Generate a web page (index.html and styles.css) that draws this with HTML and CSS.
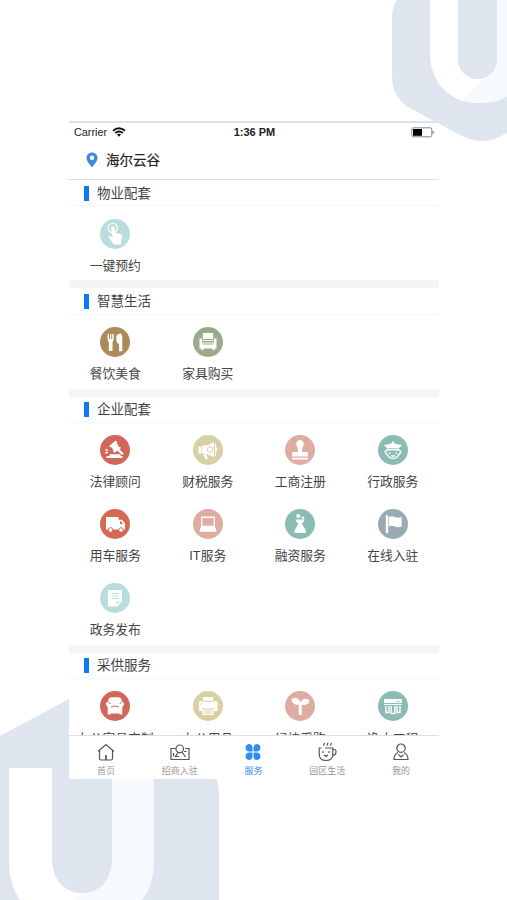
FILE: index.html
```
<!DOCTYPE html>
<html lang="zh-CN">
<head>
  <meta charset="UTF-8" />
  <meta name="viewport" content="width=device-width, initial-scale=1.0"/>
  <title>服务</title>
  <link rel="stylesheet" href="styles.css">
</head>
<body>
  <svg class="bg" viewBox="0 0 507 900">
    <path fill="#dee5ef" d="M397 0Q392 8 392 18V77C392 90 398 101 410 108L460 135C473 142 487 143 499 137L507 133V0Z"/>
    <path fill="#fff" d="M430 0V53C430 83 450 103 478 103C490 103 499 101 507 96V0H497V59C497 71 489 79 478 79S458 71 458 59V0Z"/>
    <path fill="#f6f9fd" d="M497 0H507V96C499 101 490 103 478 103C472 103 467 102 462 100L485 78C492 75 497 69 497 59Z"/>
    <path fill="#dee5ef" d="M0 736L69 699L205 765Q219 775 219 794V900H0Z"/>
    <path fill="#fff" d="M9 768H52V857C52 880 64 893 82 893V900H20C12 888 9 876 9 860Z"/>
    <path fill="#f6f9fd" d="M112 768H154V860C154 877 150 890 142 900H72L82 893C100 893 112 880 112 857Z"/>
  </svg>

  <div class="phone">
    <div class="status">
      <span class="carrier">Carrier
        <svg width="14" height="10" viewBox="0 0 14 10"><g fill="none" stroke="#111" stroke-width="1.9"><path d="M1 3.7Q7-1.2 13 3.7"/><path d="M3.2 6.1Q7 2.9 10.8 6.1"/></g><path d="M4.9 7.6Q7 6 9.1 7.6L7 9.8Z" fill="#111"/></svg>
      </span>
      <b>1:36 PM</b>
      <span class="power">
        <svg width="24" height="11" viewBox="0 0 24 11"><rect x=".8" y=".8" width="20" height="9" rx="1.5" fill="#fff" stroke="#888"/><path d="M2 2H11V8.8H2Z" fill="#000"/><path d="M21.5 3.5L23.5 5.3L21.5 7.2Z" fill="#888"/></svg>
      </span>
    </div>
    <div class="place">
      <svg width="12" height="16" viewBox="0 0 12 16"><path fill="#428bdb" fill-rule="evenodd" d="M6 .5C2.8.5.5 2.8.5 6C.5 9.5 4 12.5 6 15.5C8 12.5 11.5 9.5 11.5 6C11.5 2.8 9.2.5 6 .5ZM6 3.6A2.2 2.2 0 1 1 6 8A2.2 2.2 0 1 1 6 3.6Z"/></svg>
      <span>海尔云谷</span>
    </div>

    <main>
      <section>
        <h3>物业配套</h3>
        <div class="list">
          <div class="item">
            <svg class="icon aqua" viewBox="0 0 30 30"><circle class="line" cx="12.8" cy="9" r="4.6"/><path d="M11 9A1.8 1.8 0 0 1 14.6 9L15.5 14L20.5 15Q22.2 15.5 22 17.5L21.3 22L20.8 25.5H14L9 19Q8 17 9.5 16.8L12.5 18.5Z"/></svg>
            <p>一键预约</p>
          </div>
        </div>
      </section>

      <section>
        <h3>智慧生活</h3>
        <div class="list">
          <div class="item">
            <svg class="icon brown" viewBox="0 0 30 30"><path d="M7.5 7H9V12H10V7H11.2V12H12.2V7H13.7V12Q13.5 14.5 12.5 15V24H8.8V15Q7.8 14.5 7.5 12ZM16.3 9Q18 6 21 6.5Q22.7 9 22.3 15V24.3H19V17Q15.7 16 16.3 9Z"/></svg>
            <p>餐饮美食</p>
          </div>
          <div class="item">
            <svg class="icon green" viewBox="0 0 30 30"><path d="M9.8 6H20.2V14H9.8ZM6.5 11.5H9V15.5H21V11.5H23.5V21.5H21.5V23.3H19.5V21.5H10.5V23.3H8.5V21.5H6.5Z"/><path class="cut" d="M10 12.5H20M9.5 17H20.5"/></svg>
            <p>家具购买</p>
          </div>
        </div>
      </section>

      <section>
        <h3>企业配套</h3>
        <div class="list">
          <div class="item">
            <svg class="icon red" viewBox="0 0 30 30"><path d="M9.3 11L15.7 5.5L17.3 7.3L16.8 8.3L19.2 12L20.3 12L21 13.2L14.2 17.7L13 16.3L13.4 15L11 11.7L10 12.3ZM17.5 12.7L23.7 18.3L22.2 20L16 14.5ZM9.5 19.3H20.5V21H22.5V23H6.5V21H9.5Z"/><path class="line" d="M5.5 14.5L8 15.5M5.2 18L8 17.3"/></svg>
            <p>法律顾问</p>
          </div>
          <div class="item">
            <svg class="icon sand" viewBox="0 0 30 30"><path d="M5.5 11.5H8.5V18.5H5.5ZM9.3 10.8L15 10L21 7V22L15 19.5L9.3 18.7ZM10 19.5H13L15 23.5L12.5 24.5ZM22 8.5H23V21H22Z"/><circle class="cut" cx="17" cy="14.5" r="2.8"/><path d="M23 12Q26 14.5 23 17"/></svg>
            <p>财税服务</p>
          </div>
          <div class="item">
            <svg class="icon pink" viewBox="0 0 30 30"><path d="M15 5A4 4 0 0 1 17.5 12L17 17H21.5Q23 17 23 19V21.5H7V19Q7 17 8.5 17H13L12.5 12A4 4 0 0 1 15 5ZM7 22.8H23V24.5H7Z"/></svg>
            <p>工商注册</p>
          </div>
          <div class="item">
            <svg class="icon teal" viewBox="0 0 30 30"><path d="M6 10L13 8.7L15 6L17 8.7L24 10L20.5 13.8Q15 12.2 9.5 13.8Z"/><g class="line"><path d="M8.5 15.3Q6 16 8 18.3L11.5 22.5Q15 24.5 18.5 22.5L22 18.3Q24 16 21.5 15.3Q15 13.7 8.5 15.3Z"/><path d="M11 17.8L12.5 18.5M19 17.8L17.5 18.5M13 21H17"/></g></svg>
            <p>行政服务</p>
          </div>
          <div class="item">
            <svg class="icon orange" viewBox="0 0 30 30"><path fill-rule="evenodd" d="M6 8H18.5V10.8H22L25 14.5V20.5H6ZM20 12.2V15H23L21 12.2Z"/><g stroke="#d36b54"><circle cx="10.5" cy="21" r="2.3"/><circle cx="21" cy="21" r="2.3"/></g></svg>
            <p>用车服务</p>
          </div>
          <div class="item">
            <svg class="icon pink" viewBox="0 0 30 30"><path fill-rule="evenodd" d="M8 8Q8 7.5 8.5 7.5H21.5Q22 7.5 22 8V18H8ZM9.4 9V16.8H20.6V9ZM7.7 18H22.3L23.5 22.8H6.5Z"/></svg>
            <p>IT服务</p>
          </div>
          <div class="item">
            <svg class="icon teal" viewBox="0 0 30 30"><circle cx="13.3" cy="7" r="2"/><circle cx="18" cy="8.7" r="1.3"/><path d="M10.5 10.5H19.5Q19 13.5 16.8 14.5Q18 17 20.5 20.5L21 24H9.3L10 20.5Q12.5 17 13.3 14.5Q11 13.5 10.5 10.5Z"/></svg>
            <p>融资服务</p>
          </div>
          <div class="item">
            <svg class="icon slate" viewBox="0 0 30 30"><path d="M7.8 6.5Q9 5.5 10.2 6.5V24H7.8ZM10.8 8Q14 6.7 17 8T23.7 8V17.5Q20.5 19 17 17.5T10.8 17.5Z"/></svg>
            <p>在线入驻</p>
          </div>
          <div class="item">
            <svg class="icon aqua" viewBox="0 0 30 30"><path d="M8 7H22V18L17.5 23.5H8Z"/><path class="cut" d="M11.5 10.5H18.5M11.5 13H18.5M11.5 15.5H18.5M17.5 21.5V19H19.5"/></svg>
            <p>政务发布</p>
          </div>
        </div>
      </section>

      <section>
        <h3>采供服务</h3>
        <div class="list">
          <div class="item">
            <svg class="icon red" viewBox="0 0 30 30"><path d="M8.3 10.5Q8 6.3 12 6.3H18Q22 6.3 21.7 10.5Q24.7 11 24 14L22.3 16V23.5H19.5V22.5H10.5V23.5H7.7V16L6 14Q5.3 11 8.3 10.5Z"/><path class="cut" d="M8.5 11L10.5 13M21.5 11L19.5 13M11 16Q15 14 19 16"/></svg>
            <p>办公家具定制</p>
          </div>
          <div class="item">
            <svg class="icon sand" viewBox="0 0 30 30"><path d="M10 6H20V10H23Q24.5 10 24.5 11.5V20H20.5V24H9.5V20H6V11.5Q6 10 7.5 10H10Z"/><path class="cut" d="M9.5 10.3H20.5M9 18H21M11 20H19M11 22H19M7.5 13H9"/></svg>
            <p>办公用品</p>
          </div>
          <div class="item">
            <svg class="icon pink" viewBox="0 0 30 30"><path d="M6.5 8.5Q9 5.8 12.5 7.5Q14.5 8.7 15.2 11.3Q17.5 7.5 21 7.8Q23.5 8 24.5 9.5Q24 13 20 14Q18 14.3 16.7 13.7V24H13.7V13.8Q7.5 14.5 6.5 8.5Z"/></svg>
            <p>绿植采购</p>
          </div>
          <div class="item">
            <svg class="icon teal" viewBox="0 0 30 30"><path d="M6 8H24V14H6Z"/><path class="cut" d="M6 12.5H24M19 10.3H21.5"/><g class="line"><path d="M8 15V21.5H11V15M13.2 15V22.5H16.8V15M19 15V21.5H22V15"/></g></svg>
            <p>净水工程</p>
          </div>
        </div>
      </section>
    </main>

    <nav>
      <a>
        <svg viewBox="0 0 20 20"><path d="M3.5 8.5V16.5Q3.5 18 5 18H15Q16.5 18 16.5 16.5V8.5M2 9.5L10 2.5L18 9.5"/><path d="M10 13V18" stroke-width="1.7"/></svg>
        首页
      </a>
      <a>
        <svg viewBox="0 0 20 20"><path d="M5.5 6.5H1V17.5H19V6.5H15"/><circle cx="9.7" cy="6.8" r="3.8"/><path d="M12 10L15.5 15M8 10.5L5.5 14.5H9M3.5 11V14.5M14 9.5H16.5"/></svg>
        招商入驻
      </a>
      <a class="active">
        <svg viewBox="0 0 20 20"><path d="M5.8 2A3.8 3.8 0 0 1 9.5 5.8V9.5H5.8A3.8 3.8 0 0 1 5.8 2ZM14.2 2A3.8 3.8 0 0 0 10.5 5.8V9.5H14.2A3.8 3.8 0 0 0 14.2 2ZM5.8 18A3.8 3.8 0 0 0 9.5 14.2V10.5H5.8A3.8 3.8 0 0 0 5.8 18ZM14.2 18A3.8 3.8 0 0 1 10.5 14.2V10.5H14.2A3.8 3.8 0 0 1 14.2 18Z"/></svg>
        服务
      </a>
      <a>
        <svg viewBox="0 0 20 20"><path d="M4.5 6H2.2V12Q2.2 18.5 9 18.5T15.8 12V6H8M16 7.5H17Q19 7.5 19 9.5Q19 13.5 15.5 13.5M6.5 3.5L7.5 1M10 3.5L11 1M13.5 3.5L14.5 1M6 9V11M12 9V11M7 13Q9 15 11 13"/></svg>
        园区生活
      </a>
      <a>
        <svg viewBox="0 0 20 20"><circle cx="10" cy="6.2" r="4.2"/><path d="M7 10.5Q3 12.5 3 17.5H17Q17 12.5 13 10.5M7.5 12.5L10 15L12.5 12.5"/></svg>
        我的
      </a>
    </nav>
  </div>
</body>
</html>
```

FILE: styles.css
```
* {
  box-sizing: border-box;
}
body {
  margin: 0;
  height: 900px;
  overflow: hidden;
  background: #fff;
  color: #444;
  font-family: "Liberation Sans", "Noto Sans CJK SC", sans-serif;
}
.bg {
  position: absolute;
  top: 0;
  left: 0;
  width: 507px;
  height: 900px;
  z-index: -1;
}
.phone {
  display: flex;
  flex-direction: column;
  width: 370px;
  height: 658px;
  margin: 121px 0 0 69px;
  background: #fff;
  border-top: 2px solid #d5e3f1;
}
.status {
  display: grid;
  grid-template-columns: 1fr auto 1fr;
  align-items: center;
  height: 18px;
  padding: 0 4px 0 5px;
  font-size: 10.8px;
  color: #222;
}
.carrier {
  display: flex;
  align-items: center;
  gap: 5px;
}
.status b {
  font-size: 11px;
}
.power {
  display: flex;
  justify-content: flex-end;
}
.place {
  display: flex;
  align-items: center;
  gap: 8px;
  height: 39px;
  padding-left: 17px;
  border-bottom: 1px solid #ddd;
  font-size: 13.5px;
  color: #222;
  -webkit-text-stroke: 0.2px #222;
}
.place span {
  padding-bottom: 3px;
}
main {
  flex: 1;
  overflow: hidden;
}
section {
  border-bottom: 8px solid #f5f5f5;
}
h3 {
  display: flex;
  align-items: center;
  gap: 8px;
  height: 26.25px;
  margin: 0;
  padding: 0 0 2px 15px;
  border-bottom: 1px solid #f7f7f7;
  font-size: 13.5px;
  font-weight: normal;
}
h3::before {
  content: "";
  width: 5px;
  height: 15px;
  margin-top: 3px;
  background: #0b78f5;
}
.list {
  display: grid;
  grid-template-columns: repeat(4, 1fr);
}
.item {
  display: flex;
  flex-direction: column;
  align-items: center;
  height: 74px;
  padding-top: 12.3px;
}
.item p {
  margin: 7.3px 0 0;
  font-size: 12.8px;
  line-height: 20px;
  white-space: nowrap;
}
.icon {
  width: 30px;
  height: 30px;
  border-radius: 50%;
  fill: #fff;
  flex: none;
}
.icon .line {
  fill: none;
  stroke: #fff;
  stroke-width: 1.4;
}
.icon .cut {
  fill: none;
  stroke: currentColor;
  stroke-width: 1;
}
.aqua { background: #b9dcdd; color: #b9dcdd; }
.brown { background: #ad8b59; color: #ad8b59; }
.green { background: #9aab8a; color: #9aab8a; }
.red { background: #d0675a; color: #d0675a; }
.orange { background: #d36b54; color: #d36b54; }
.sand { background: #d9d1a6; color: #d9d1a6; }
.pink { background: #dfaca1; color: #dfaca1; }
.teal { background: #8abcb4; color: #8abcb4; }
.slate { background: #98abb3; color: #98abb3; }

nav {
  display: flex;
  height: 44px;
  padding-right: 1px;
  border-top: 1px solid #ddd;
}
nav a {
  flex: 1;
  display: flex;
  flex-direction: column;
  align-items: center;
  padding-top: 6px;
  font-size: 9px;
  line-height: 13px;
  color: #999;
}
nav svg {
  width: 20px;
  height: 20px;
  margin-bottom: 3px;
  fill: none;
  stroke: #555;
  stroke-width: 1.2;
}
nav .active {
  color: #2f8cf0;
}
nav .active svg {
  fill: #2f8cf0;
  stroke: none;
}
```
